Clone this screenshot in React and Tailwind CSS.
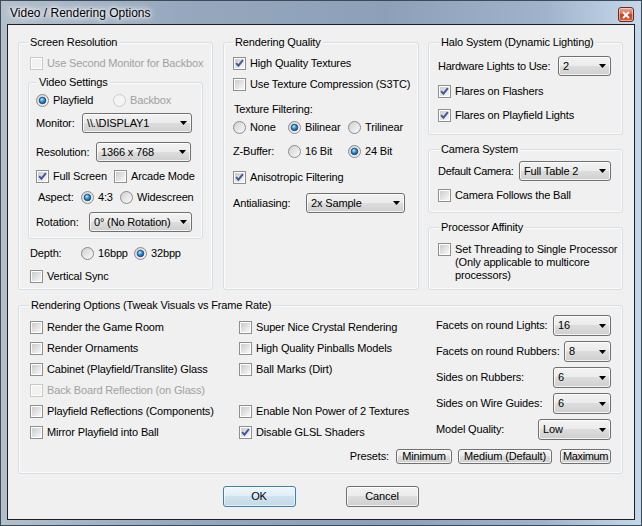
import React from "react";

// Shared gradients for the checkbox / radio glyphs
function Defs() {
  return (
    <svg width="0" height="0" className="block shrink-0">
      <defs>
        <linearGradient id="cbFill" x1="0" y1="0" x2="1" y2="1">
          <stop offset="0" stopColor="#cbcbcb" />
          <stop offset="1" stopColor="#f8f8f8" />
        </linearGradient>
        <linearGradient id="rbFill" x1="0" y1="0" x2="1" y2="1">
          <stop offset="0" stopColor="#cfcfcf" />
          <stop offset="1" stopColor="#fcfcfc" />
        </linearGradient>
        <radialGradient id="rbDot" cx="0.4" cy="0.35" r="0.75">
          <stop offset="0" stopColor="#b4f0ff" />
          <stop offset="0.45" stopColor="#2b8fd9" />
          <stop offset="1" stopColor="#0c427c" />
        </radialGradient>
      </defs>
    </svg>
  );
}

function CheckBox({ checked, disabled }) {
  return (
    <svg width="13" height="13" viewBox="0 0 13 13" className="shrink-0">
      <rect x="0.5" y="0.5" width="12" height="12" fill="#ffffff" stroke={disabled ? "#c8c8c8" : "#8e8f8f"} />
      <rect x="2" y="2" width="9" height="9" fill={disabled ? "#f2f2f2" : "url(#cbFill)"} />
      {checked && (
        <path d="M3.1 6.2 L5.4 8.7 L9.9 3.1" fill="none" stroke="#3f56a4" strokeWidth="1.9" />
      )}
    </svg>
  );
}

function RadioDot({ checked, disabled }) {
  return (
    <svg width="13" height="13" viewBox="0 0 13 13" className="shrink-0">
      <circle cx="6.5" cy="6.5" r="6" fill={disabled ? "#f4f4f4" : "url(#rbFill)"} stroke={disabled ? "#cacaca" : "#8a8a8a"} />
      {checked && <circle cx="6.5" cy="6.5" r="3.3" fill="url(#rbDot)" stroke="#1d3f69" strokeWidth="0.8" />}
    </svg>
  );
}

function Check({ label, checked = false, disabled = false, className = "" }) {
  return (
    <div className={`flex items-center gap-[4px] h-[13px] whitespace-nowrap ${disabled ? "text-[#a0a0a0]" : ""} ${className}`}>
      <CheckBox checked={checked} disabled={disabled} />
      <span>{label}</span>
    </div>
  );
}

function Radio({ label, checked = false, disabled = false, className = "" }) {
  return (
    <div className={`flex items-center gap-[4px] h-[13px] whitespace-nowrap ${disabled ? "text-[#a0a0a0]" : ""} ${className}`}>
      <RadioDot checked={checked} disabled={disabled} />
      <span>{label}</span>
    </div>
  );
}

function Combo({ value, className = "" }) {
  return (
    <div
      className={`flex items-center justify-between shrink-0 rounded-[3px] border border-[#707070] bg-[linear-gradient(#f2f2f2_0%,#ebebeb_50%,#dddddd_50%,#cfcfcf_100%)] shadow-[inset_0_0_0_1px_rgba(255,255,255,0.75)] pl-[4px] pr-[4px] whitespace-nowrap ${className}`}
    >
      <span>{value}</span>
      <svg width="7" height="4" viewBox="0 0 7 4">
        <path d="M0 0H7L3.5 4Z" fill="#000" />
      </svg>
    </div>
  );
}

function Button({ children, className = "", isDefault = false }) {
  const look = isDefault
    ? "border-[#3c7fb1] bg-[linear-gradient(#eef6fb_0%,#e0edf5_50%,#cfe2ef_50%,#c3d9e8_100%)] shadow-[inset_0_0_0_1px_rgba(255,255,255,0.6)]"
    : "border-[#707070] bg-[linear-gradient(#f2f2f2_0%,#ebebeb_50%,#dddddd_50%,#cfcfcf_100%)] shadow-[inset_0_0_0_1px_rgba(255,255,255,0.75)]";
  return (
    <div className={`flex items-center justify-center shrink-0 rounded-[3px] border whitespace-nowrap ${look} ${className}`}>
      {children}
    </div>
  );
}

function Group({ label, className = "", labelClass = "ml-[9px]", children }) {
  return (
    <div className={`flex flex-col border border-[#d5dfe5] rounded-[3px] shadow-[inset_0_0_0_1px_#fbfbfb] ${className}`}>
      <span className={`-mt-[7px] self-start px-[2px] bg-[#f0f0f0] whitespace-nowrap ${labelClass}`}>{label}</span>
      {children}
    </div>
  );
}

function CloseButton() {
  return (
    <div className="mt-[6px] mr-[7px] w-[16px] h-[15px] rounded-[3px] border border-[#6e2a1c] bg-[linear-gradient(#eaa898_0%,#d86c51_45%,#c5401f_52%,#d7643f_100%)] shadow-[inset_0_0_0_1px_rgba(255,235,225,0.55)] flex items-center justify-center">
      <svg width="8" height="8" viewBox="0 0 8 8">
        <path d="M1 1L7 7M7 1L1 7" stroke="#ffffff" strokeWidth="2" />
      </svg>
    </div>
  );
}

export default function App() {
  return (
    <div className="w-[642px] h-[526px] overflow-hidden border border-[#3f4a57] bg-[linear-gradient(90deg,#b3bfcc_0%,#95a8be_28%,#8ca0b7_60%,#9fb4cb_85%,#c5d7eb_100%)] flex flex-col font-['Liberation_Sans',Arial,sans-serif] text-[11px] leading-[13px] tracking-[-0.15px] text-black">
      <Defs />
      {/* title bar */}
      <div className="h-[23px] shrink-0 flex justify-between items-start">
        <span className="ml-[9px] mt-[5px] text-[12px] leading-[15px] tracking-normal [text-shadow:0_0_10px_#ffffff,0_0_6px_#ffffff,0_0_3px_#ffffff]">
          Video / Rendering Options
        </span>
        <CloseButton />
      </div>

      {/* client area */}
      <div className="flex-1 mx-[6px] mb-[5px] border border-[#1f1f1f] bg-[#f0f0f0] flex flex-col pl-[10px] pr-[11px] pt-[17px] pb-[12px]">
        <div className="flex items-stretch">
          {/* Screen Resolution */}
          <Group label="Screen Resolution" className="w-[195px] pb-[6px]">
            <Check disabled className="mt-[8px] ml-[11px]" label="Use Second Monitor for Backbox" />
            <Group label="Video Settings" className="mt-[12px] ml-[9px] mr-[9px] pb-[6px]" labelClass="ml-[8px]">
              <div className="mt-[5px] ml-[7px] flex items-center">
                <Radio checked label="Playfield" className="w-[77px]" />
                <Radio disabled label="Backbox" />
              </div>
              <div className="mt-[6px] ml-[7px] flex items-center">
                <span className="w-[46px]">Monitor:</span>
                <Combo value={"\\\\.\\DISPLAY1"} className="w-[110px] h-[20px]" />
              </div>
              <div className="mt-[9px] ml-[7px] flex items-center">
                <span className="w-[60px]">Resolution:</span>
                <Combo value="1366 x 768" className="w-[95px] h-[20px]" />
              </div>
              <div className="mt-[8px] ml-[7px] flex items-center">
                <Check checked label="Full Screen" className="w-[78px]" />
                <Check label="Arcade Mode" />
              </div>
              <div className="mt-[8px] ml-[9px] flex items-center">
                <span className="w-[43px]">Aspect:</span>
                <Radio checked label="4:3" className="w-[39px]" />
                <Radio label="Widescreen" />
              </div>
              <div className="mt-[8px] ml-[7px] flex items-center">
                <span className="w-[53px]">Rotation:</span>
                <Combo value="0° (No Rotation)" className="w-[103px] h-[20px]" />
              </div>
            </Group>
            <div className="mt-[8px] ml-[11px] flex items-center h-[13px]">
              <span className="w-[51px]">Depth:</span>
              <Radio label="16bpp" className="w-[53px]" />
              <Radio checked label="32bpp" />
            </div>
            <Check className="mt-[10px] ml-[11px]" label="Vertical Sync" />
          </Group>

          {/* Rendering Quality */}
          <Group label="Rendering Quality" className="ml-[10px] w-[196px]">
            <Check checked className="mt-[8px] ml-[9px]" label="High Quality Textures" />
            <Check className="mt-[8px] ml-[9px]" label="Use Texture Compression (S3TC)" />
            <span className="mt-[12px] ml-[10px]">Texture Filtering:</span>
            <div className="mt-[5px] ml-[9px] flex items-center">
              <Radio label="None" className="w-[55px]" />
              <Radio checked label="Bilinear" className="w-[60px]" />
              <Radio label="Trilinear" />
            </div>
            <div className="mt-[11px] ml-[9px] flex items-center h-[13px]">
              <span className="w-[55px]">Z-Buffer:</span>
              <Radio label="16 Bit" className="w-[60px]" />
              <Radio checked label="24 Bit" />
            </div>
            <Check checked className="mt-[13px] ml-[9px]" label="Anisotropic Filtering" />
            <div className="mt-[9px] ml-[9px] flex items-center">
              <span className="w-[73px]">Antialiasing:</span>
              <Combo value="2x Sample" className="w-[99px] h-[20px]" />
            </div>
          </Group>

          {/* right column */}
          <div className="ml-[9px] w-[195px] flex flex-col">
            <Group label="Halo System (Dynamic Lighting)" className="pb-[12px]" labelClass="ml-[10px]">
              <div className="mt-[7px] ml-[9px] flex items-center">
                <span className="w-[120px] whitespace-nowrap tracking-[-0.25px]">Hardware Lights to Use:</span>
                <Combo value="2" className="w-[53px] h-[20px]" />
              </div>
              <Check checked className="mt-[9px] ml-[9px]" label="Flares on Flashers" />
              <Check checked className="mt-[11px] ml-[9px]" label="Flares on Playfield Lights" />
            </Group>
            <Group label="Camera System" className="mt-[14px] pb-[10px]" labelClass="ml-[10px]">
              <div className="mt-[5px] ml-[9px] flex items-center">
                <span className="w-[81px] whitespace-nowrap tracking-[-0.3px]">Default Camera:</span>
                <Combo value="Full Table 2" className="w-[92px] h-[20px]" />
              </div>
              <Check className="mt-[8px] ml-[9px]" label="Camera Follows the Ball" />
            </Group>
            <Group label="Processor Affinity" className="mt-[14px] flex-1" labelClass="ml-[10px]">
              <div className="mt-[9px] ml-[9px] flex items-start gap-[4px]">
                <CheckBox />
                <span className="whitespace-nowrap">
                  Set Threading to Single Processor
                  <br />
                  (Only applicable to multicore
                  <br />
                  processors)
                </span>
              </div>
            </Group>
          </div>
        </div>

        {/* Rendering Options */}
        <Group label="Rendering Options (Tweak Visuals vs Frame Rate)" className="mt-[15px] pb-[9px]" labelClass="ml-[10px]">
          <div className="flex items-start">
            <div className="mt-[9px] ml-[11px] w-[209px] flex flex-col gap-[8px]">
              <Check label="Render the Game Room" />
              <Check label="Render Ornaments" />
              <Check label="Cabinet (Playfield/Translite) Glass" />
              <Check disabled label="Back Board Reflection (on Glass)" />
              <Check label="Playfield Reflections (Components)" />
              <Check label="Mirror Playfield into Ball" />
            </div>
            <div className="mt-[9px] w-[197px] flex flex-col gap-[8px]">
              <Check label="Super Nice Crystal Rendering" />
              <Check label="High Quality Pinballs Models" />
              <Check label="Ball Marks (Dirt)" />
              <div className="h-[13px]" />
              <Check label="Enable Non Power of 2 Textures" />
              <Check checked label="Disable GLSL Shaders" />
            </div>
            <div className="mt-[3px] w-[175px] flex flex-col gap-[5px]">
              <div className="flex items-center justify-between">
                <span className="whitespace-nowrap">Facets on round Lights:</span>
                <Combo value="16" className="w-[58px] h-[21px]" />
              </div>
              <div className="flex items-center justify-between">
                <span className="whitespace-nowrap">Facets on round Rubbers:</span>
                <Combo value="8" className="w-[47px] h-[21px]" />
              </div>
              <div className="flex items-center justify-between">
                <span className="whitespace-nowrap">Sides on Rubbers:</span>
                <Combo value="6" className="w-[58px] h-[21px]" />
              </div>
              <div className="flex items-center justify-between">
                <span className="whitespace-nowrap">Sides on Wire Guides:</span>
                <Combo value="6" className="w-[58px] h-[21px]" />
              </div>
              <div className="flex items-center justify-between">
                <span className="whitespace-nowrap">Model Quality:</span>
                <Combo value="Low" className="w-[73px] h-[21px]" />
              </div>
            </div>
          </div>
          <div className="mt-[9px] pr-[11px] flex items-center justify-end">
            <span className="mr-[7px]">Presets:</span>
            <Button className="w-[56px] h-[15px]">Minimum</Button>
            <Button className="ml-[6px] w-[94px] h-[15px]">Medium (Default)</Button>
            <Button className="ml-[8px] w-[51px] h-[15px] tracking-[-0.4px]">Maximum</Button>
          </div>
        </Group>

        {/* dialog buttons */}
        <div className="mt-[12px] flex justify-center gap-[50px]">
          <Button isDefault className="w-[73px] h-[21px]">OK</Button>
          <Button className="w-[73px] h-[21px]">Cancel</Button>
        </div>
      </div>
    </div>
  );
}
